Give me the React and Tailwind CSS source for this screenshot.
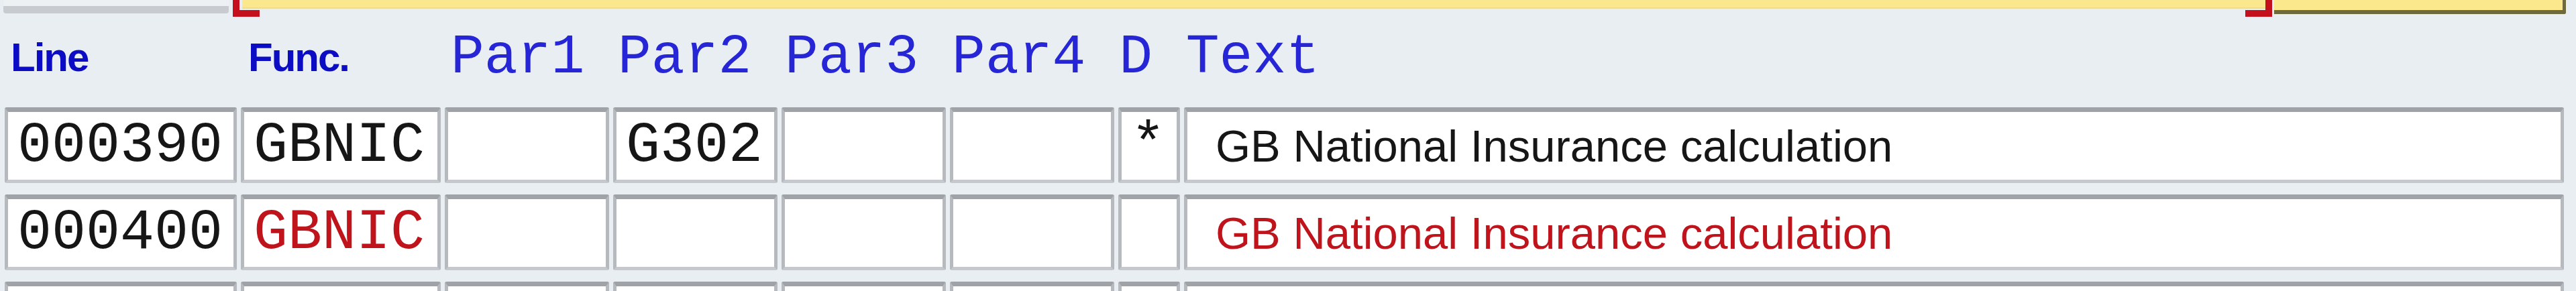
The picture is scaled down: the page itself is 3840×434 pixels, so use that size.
import React from 'react';

const mono = { fontFamily: '"Liberation Mono", "Courier New", monospace' };
const sans = { fontFamily: '"Liberation Sans", Arial, sans-serif' };

const rows = [
  { line: '000390', func: 'GBNIC', par1: '', par2: 'G302', par3: '', par4: '', d: '*', text: 'GB National Insurance calculation', red: false },
  { line: '000400', func: 'GBNIC', par1: '', par2: '', par3: '', par4: '', d: '', text: 'GB National Insurance calculation', red: true },
  { line: '', func: '', par1: '', par2: '', par3: '', par4: '', d: '', text: '', red: false },
];

// one input-looking cell of the table control
const Cell = ({ width, children, red, textCell }) => (
  <div
    className={`h-[113px] shrink-0 flex items-center bg-white rounded-[3px] border-[5px] border-t-[7px] border-[#b6babe] border-t-[#9fa3a7] border-b-[#c5c9cd] ${width} ${
      textCell ? 'pl-[42px] text-[67px]' : 'pl-[14px] text-[85px]'
    } ${red ? 'text-[#c0141c]' : 'text-[#161616]'} leading-none whitespace-pre overflow-hidden`}
    style={textCell ? sans : mono}
  >
    {children}
  </div>
);

const Row = ({ row }) => (
  <div className="flex gap-[6px] pl-[7px] pr-[18px]">
    <Cell width="w-[346px]">{row.line}</Cell>
    <Cell width="w-[298px]" red={row.red}>{row.func}</Cell>
    <Cell width="w-[245px]">{row.par1}</Cell>
    <Cell width="w-[245px]">{row.par2}</Cell>
    <Cell width="w-[245px]">{row.par3}</Cell>
    <Cell width="w-[245px]">{row.par4}</Cell>
    <Cell width="w-[92px]">{row.d}</Cell>
    <Cell width="flex-1" red={row.red} textCell>{row.text}</Cell>
  </div>
);

export default function App() {
  return (
    <div className="w-[3840px] h-[434px] overflow-hidden bg-[#e9eef2]">
      {/* top strip: bottom of the fields above */}
      <div className="flex h-[26px]">
        <div className="ml-[5px] w-[336px] h-[20px] bg-[#eef1f3] border-b-[11px] border-[#c8ccd0] rounded-b-[4px]" />
        <div className="relative ml-[6px] w-[3040px] h-[26px]">
          <div className="absolute left-[14px] right-[10px] top-0 h-[13px] bg-[#fbe78c] border-b-[2px] border-[#e9dc9c]" />
          <div className="absolute left-0 top-0 w-[40px] h-[25px] border-l-[10px] border-b-[10px] border-[#c4101c]" />
          <div className="absolute right-0 top-0 w-[40px] h-[25px] border-r-[10px] border-b-[10px] border-[#c4101c]" />
        </div>
        <div className="ml-[3px] w-[435px] h-[21px] bg-[#fbe78c] border-b-[6px] border-r-[5px] border-[#6e6a3e] rounded-br-[3px]" />
      </div>

      {/* column headings */}
      <div className="flex items-center h-[120px]">
        <span className="w-[359px] pl-[16px] text-[60px] font-bold leading-none tracking-[-2px] text-[#0c0cc4]" style={sans}>Line</span>
        <span className="w-[313px] pl-[11px] text-[60px] font-bold leading-none tracking-[-2px] text-[#0c0cc4]" style={sans}>Func.</span>
        <span className="text-[83px] leading-none whitespace-pre text-[#2626d6]" style={mono}>Par1 Par2 Par3 Par4 D Text</span>
      </div>

      {/* table rows */}
      <div className="mt-[14px] flex flex-col gap-[17px]">
        {rows.map((row, i) => (
          <Row key={i} row={row} />
        ))}
      </div>
    </div>
  );
}
